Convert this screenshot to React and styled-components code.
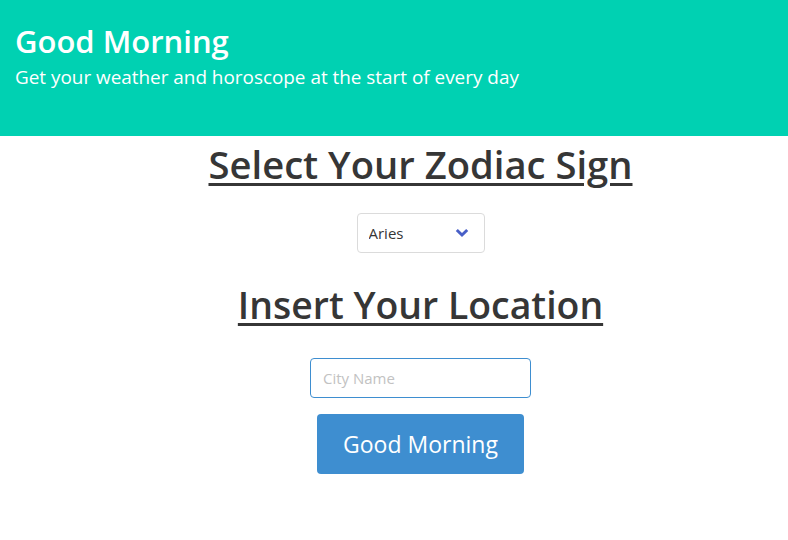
import styled, { createGlobalStyle } from 'styled-components'

const GlobalStyle = createGlobalStyle`
   html, body {
      margin: 0;
      padding: 0;
      background: #ffffff;
      font-family: "Open Sans", "Noto Sans", sans-serif;
      color: #4a4a4a;
   }
   * {
      box-sizing: border-box;
   }
`

const Hero = styled.header`
   background-color: #00d1b2;
   height: 136px;
   padding: 24px 16px 0 15px;
`

const HeroTitle = styled.h1`
   margin: 0;
   color: #ffffff;
   font-size: 31px;
   font-weight: 600;
   line-height: 1.125;
`

const HeroSubtitle = styled.h2`
   margin: 7px 0 0;
   color: #ffffff;
   font-size: 18.9px;
   font-weight: 400;
   line-height: 1.25;
`

const Main = styled.main`
   display: flex;
   flex-direction: column;
   align-items: center;
   padding-left: 53px;
`

const SectionTitle = styled.h2`
   margin: ${(p) => p.$top}px 0 0;
   color: #363636;
   font-size: ${(p) => p.$size}px;
   font-weight: 600;
   line-height: 1.125;
   text-decoration: underline;
   text-decoration-thickness: 3px;
   text-underline-offset: 4px;
`

const SelectWrap = styled.div`
   position: relative;
   margin-top: 27px;
   width: 128px;
   height: 40px;
`

const Select = styled.select`
   appearance: none;
   width: 100%;
   height: 100%;
   padding: 0 36px 0 11px;
   border: 1px solid #dbdbdb;
   border-radius: 4px;
   background: #ffffff;
   color: #363636;
   font-family: inherit;
   font-size: 15px;
   outline: none;
`

const Arrow = styled.svg`
   position: absolute;
   right: 16px;
   top: 15px;
   pointer-events: none;
`

const Input = styled.input`
   margin-top: 32px;
   width: 221px;
   height: 40px;
   padding: 0 12px;
   border: 1px solid #3e8ed0;
   border-radius: 4px;
   color: #363636;
   font-family: inherit;
   font-size: 15px;
   outline: none;

   &::placeholder {
      color: #c2c2c2;
   }
`

const Button = styled.button`
   margin-top: 16px;
   width: 207px;
   height: 60px;
   border: none;
   border-radius: 4px;
   background-color: #3e8ed0;
   color: #ffffff;
   font-family: inherit;
   font-size: 23px;
   cursor: pointer;
`

export default function App() {
   return (
      <>
         <GlobalStyle />
         <Hero>
            <HeroTitle>Good Morning</HeroTitle>
            <HeroSubtitle>Get your weather and horoscope at the start of every day</HeroSubtitle>
         </Hero>
         <Main>
            <SectionTitle $top={7} $size={38.2}>Select Your Zodiac Sign</SectionTitle>
            <SelectWrap>
               <Select defaultValue="Aries">
                  <option>Aries</option>
                  <option>Taurus</option>
                  <option>Gemini</option>
                  <option>Cancer</option>
                  <option>Leo</option>
                  <option>Virgo</option>
                  <option>Libra</option>
                  <option>Scorpio</option>
                  <option>Sagittarius</option>
                  <option>Capricorn</option>
                  <option>Aquarius</option>
                  <option>Pisces</option>
               </Select>
               <Arrow width="14" height="10" viewBox="0 0 14 10">
                  <path d="M1.8 2 L7 7 L12.2 2" fill="none" stroke="#485fc7" strokeWidth="3" />
               </Arrow>
            </SelectWrap>
            <SectionTitle $top={31} $size={37.4}>Insert Your Location</SectionTitle>
            <Input placeholder="City Name" />
            <Button>Good Morning</Button>
         </Main>
      </>
   )
}
